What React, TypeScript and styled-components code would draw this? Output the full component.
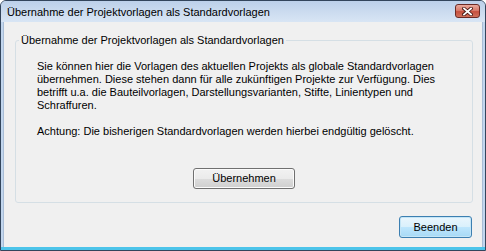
import React from "react";
import styled, { createGlobalStyle } from "styled-components";

const Global = createGlobalStyle`
  html, body { margin: 0; padding: 0; background: #ffffff; }
  body { font-family: "Liberation Sans", Arial, sans-serif; }
  #root { width: 486px; height: 251px; }
`;

const Window = styled.div`
  box-sizing: border-box;
  width: 486px;
  height: 251px;
  border: 1px solid #33455c;
  border-radius: 6px 6px 0 0;
  background: #c2d6ee;
  display: flex;
  flex-direction: column;
  overflow: hidden;
`;

const TitleBar = styled.div`
  height: 21px;
  flex: none;
  display: flex;
  align-items: flex-start;
  background: linear-gradient(to bottom, #bcd0ea 0%, #cbdbef 50%, #d8e5f4 100%);
`;

const TitleText = styled.div`
  flex: 1;
  padding: 5px 0 0 6px;
  font-size: 11px;
  line-height: 13px;
  color: #000;
  white-space: nowrap;
`;

const CloseButton = styled.button`
  box-sizing: border-box;
  width: 25px;
  height: 14px;
  margin: 3px 5px 0 0;
  padding: 0;
  border: 1px solid #6b2a24;
  border-radius: 3px;
  background: linear-gradient(to bottom, #e9a99c 0%, #d97c6c 45%, #c7503e 55%, #d0705a 100%);
  display: flex;
  align-items: center;
  justify-content: center;
`;

const Frame = styled.div`
  flex: 1;
  display: flex;
  padding: 0 3px 0 3px;
  border-bottom: 3px solid #4cc4ea;
`;

const Client = styled.div`
  flex: 1;
  box-sizing: border-box;
  background: #f0f0f0;
  display: flex;
  flex-direction: column;
  padding: 12px 9px 9px 11px;
  border-left: 1px solid #a9bdd6;
  border-right: 1px solid #a9bdd6;
  margin: 0 -1px;
`;

const Group = styled.fieldset`
  margin: 0;
  min-width: 0;
  height: 169px;
  box-sizing: border-box;
  border: 1px solid #d5dfe5;
  border-radius: 3px;
  padding: 0 3px 13px 3px;
  display: flex;
  flex-direction: column;
`;

const Legend = styled.legend`
  padding: 0 2px;
  font-size: 11px;
  line-height: 13px;
  color: #000;
  white-space: nowrap;
`;

const Body = styled.p`
  margin: 13px 0 0 18px;
  font-size: 11px;
  line-height: 13px;
  color: #000;
  white-space: nowrap;
`;

const Centered = styled.div`
  margin-top: 30px;
  display: flex;
  justify-content: center;
`;

const Footer = styled.div`
  margin-top: 13px;
  display: flex;
  justify-content: flex-end;
  padding-right: 1px;
`;

const Button = styled.button<{ $w: number; $h: number; $default?: boolean }>`
  box-sizing: border-box;
  width: ${(p) => p.$w}px;
  height: ${(p) => p.$h}px;
  padding: 0;
  font-family: "Liberation Sans", Arial, sans-serif;
  font-size: 11px;
  line-height: 13px;
  color: #000;
  border: 1px solid ${(p) => (p.$default ? "#3c7fb1" : "#707070")};
  border-radius: 3px;
  box-shadow: inset 0 0 0 1px ${(p) => (p.$default ? "#c4e5f6" : "#fbfbfb")};
  background: ${(p) =>
    p.$default
      ? "linear-gradient(to bottom, #eaf6fd 0%, #d9f0fc 50%, #bee6fd 50%, #a7d9f5 100%)"
      : "linear-gradient(to bottom, #f2f2f2 0%, #ebebeb 50%, #dddddd 50%, #cfcfcf 100%)"};
`;

export default function App() {
  return (
    <>
      <Global />
      <Window>
        <TitleBar>
          <TitleText>Übernahme der Projektvorlagen als Standardvorlagen</TitleText>
          <CloseButton aria-label="Schließen">
            <svg width="11" height="9" viewBox="0 0 11 9">
              <path d="M2 1.5 L9 7.5 M9 1.5 L2 7.5" stroke="#4a1a14" strokeWidth="3.6" strokeLinecap="square" />
              <path d="M2 1.5 L9 7.5 M9 1.5 L2 7.5" stroke="#ffffff" strokeWidth="1.8" strokeLinecap="square" />
            </svg>
          </CloseButton>
        </TitleBar>
        <Frame>
          <Client>
            <Group>
              <Legend>Übernahme der Projektvorlagen als Standardvorlagen</Legend>
              <Body>
                Sie können hier die Vorlagen des aktuellen Projekts als globale Standardvorlagen
                <br />
                übernehmen. Diese stehen dann für alle zukünftigen Projekte zur Verfügung. Dies
                <br />
                betrifft u.a. die Bauteilvorlagen, Darstellungsvarianten, Stifte, Linientypen und
                <br />
                Schraffuren.
                <br />
                <br />
                Achtung: Die bisherigen Standardvorlagen werden hierbei endgültig gelöscht.
              </Body>
              <Centered>
                <Button $w={102} $h={21}>Übernehmen</Button>
              </Centered>
            </Group>
            <Footer>
              <Button $w={73} $h={22} $default>Beenden</Button>
            </Footer>
          </Client>
        </Frame>
      </Window>
    </>
  );
}
